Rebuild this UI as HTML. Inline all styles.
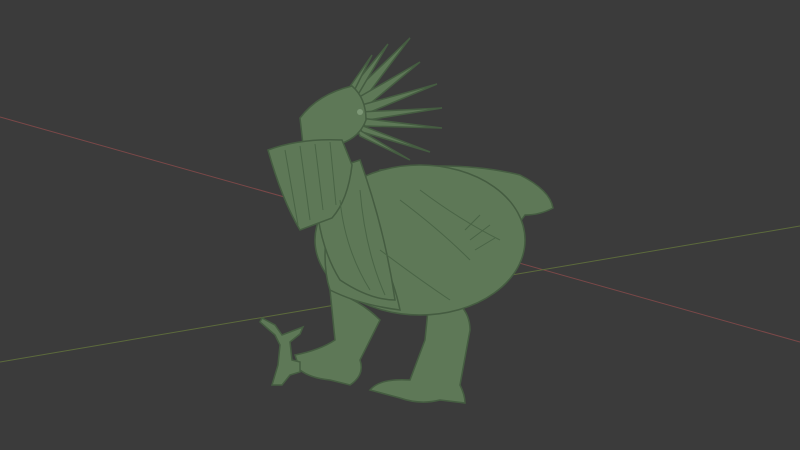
<!DOCTYPE html>
<html><head><style>
html,body{margin:0;padding:0;background:#3b3b3b;width:800px;height:450px;overflow:hidden}
</style></head><body>
<svg width="800" height="450" viewBox="0 0 800 450" xmlns="http://www.w3.org/2000/svg">
<rect width="800" height="450" fill="#3b3b3b"/>
<line x1="0" y1="117" x2="800" y2="342" stroke="#7a4848" stroke-width="1"/>
<line x1="0" y1="362" x2="800" y2="226" stroke="#5c6a3c" stroke-width="1"/>
<g fill="#5e7857" stroke="#455c41" stroke-width="1.5">
<path d="M350,96 L410,38 L362,102Z"/>
<path d="M354,100 L420,62 L366,107Z"/>
<path d="M358,106 L437,84 L368,113Z"/>
<path d="M360,112 L442,108 L368,120Z"/>
<path d="M360,118 L442,128 L365,126Z"/>
<path d="M358,124 L430,152 L362,132Z"/>
<path d="M356,128 L410,160 L360,136Z"/>
<path d="M348,92 L388,44 L356,98Z"/>
<path d="M344,95 L372,55 L350,99Z"/>
<path d="M380,170 Q460,160 520,175 Q550,190 553,208 Q540,215 525,215 Q500,250 470,300 L420,290Z"/>
<path d="M430,290 Q470,300 470,330 L460,385 Q465,395 465,403 L440,400 Q420,405 400,398 L370,390 Q380,378 410,380 L425,340Z"/>
<path d="M330,290 Q360,300 380,320 L360,360 Q365,375 350,385 L330,380 Q310,378 300,370 L295,355 Q320,350 335,340Z"/>
<ellipse cx="420" cy="240" rx="105" ry="75"/>
<path d="M330,210 Q320,260 330,290 Q360,305 400,310 Q390,260 350,200Z"/>
<path d="M315,175 Q315,240 340,280 Q370,300 395,300 Q385,230 360,160Z"/>
<path d="M300,118 Q318,94 352,86 Q366,98 366,120 Q358,142 330,146 L303,145Z"/>
<path d="M268,150 Q300,138 342,140 L352,165 Q348,200 332,218 L300,230 Q282,200 268,150Z"/>
<path d="M262,318 L275,325 L282,335 L295,330 L303,327 L300,334 L290,342 L292,360 L300,362 L300,372 L290,375 L282,385 L272,385 L278,365 L280,345 L275,335 L260,322Z"/>
</g>
<g fill="none" stroke="#4a6446" stroke-width="1">
<path d="M285,150 L298,225 M300,146 L310,220 M315,144 L323,210 M330,142 L336,205"/>
<path d="M340,200 Q345,250 370,290 M360,190 Q365,250 385,295"/>
<path d="M400,200 Q440,230 470,260 M420,190 Q460,220 500,240 M380,250 Q420,280 450,300"/>
<path d="M465,230 L480,215 M470,240 L490,225 M475,250 L495,238"/>
</g>
<circle cx="360" cy="112" r="3" fill="#7d9776"/>
</svg>
</body></html>
